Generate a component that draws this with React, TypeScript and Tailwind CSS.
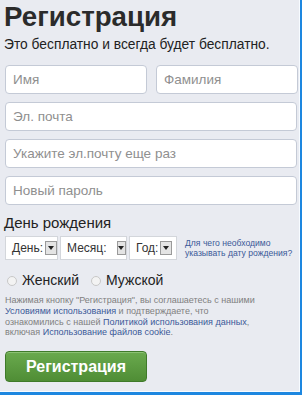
import React from "react";

const sans = { fontFamily: '"Liberation Sans", Arial, sans-serif' };

function TextInput({ placeholder, className }: { placeholder: string; className?: string }) {
  return (
    <input
      placeholder={placeholder}
      className={`h-[29px] rounded-[4px] border border-[#c4cad6] bg-white px-[7px] text-[13.5px] text-[#333] placeholder:text-[#8f8f8f] outline-none ${className ?? ""}`}
    />
  );
}

function DateSelect({ label, width, gap }: { label: string; width: string; gap: string }) {
  return (
    <div className={`flex h-[24px] ${width} shrink-0 items-center border border-[#d3d6db] bg-white pl-[6px] text-[12px] text-[#333]`}>
      <span>{label}</span>
      <span className={`${gap} flex h-[14px] w-[12px] items-center justify-center border border-[#9a9a9a] bg-[#e4e4e4]`}>
        <svg width="6" height="4" viewBox="0 0 6 4">
          <path d="M0 0 L6 0 L3 4 Z" fill="#222" />
        </svg>
      </span>
    </div>
  );
}

function Radio({ label }: { label: string }) {
  return (
    <label className="flex items-center gap-[5px]">
      <span className="h-[10px] w-[10px] rounded-full border border-[#c8c8c8] bg-[#f3f3f3]" />
      <span className="text-[14px] text-[#222]">{label}</span>
    </label>
  );
}

export default function App() {
  return (
    <div className="h-[395px] w-[302px] overflow-hidden border-r-[2px] border-b-[3px] border-[#1d87e0]" style={sans}>
      <div className="flex h-full w-full flex-col border-r border-b border-[#f7fbff] bg-[#e9ebf1] pl-[5px] pr-[4px]">
        <h1 className="mt-[1px] ml-[-1px] text-[27.7px] font-bold leading-[32px] text-[#2b2b2b]">Регистрация</h1>
        <p className="mt-[4px] ml-[-1px] text-[13.8px] leading-[15px] text-[#222]">Это бесплатно и всегда будет бесплатно.</p>

        <div className="mt-[13px] flex flex-col gap-[8px]">
          <div className="flex gap-[9px]">
            <TextInput placeholder="Имя" className="w-[142px]" />
            <TextInput placeholder="Фамилия" className="w-[142px]" />
          </div>
          <TextInput placeholder="Эл. почта" className="w-[292px]" />
          <TextInput placeholder="Укажите эл.почту еще раз" className="w-[292px]" />
          <TextInput placeholder="Новый пароль" className="w-[292px]" />
        </div>

        <div className="mt-[9px] ml-[-1px] text-[15px] leading-[18px] text-[#222]">День рождения</div>
        <div className="mt-[4px] flex items-center gap-[2px]">
          <DateSelect label="День:" width="w-[53px]" gap="ml-[2px]" />
          <DateSelect label="Месяц:" width="w-[67px]" gap="ml-[10px]" />
          <DateSelect label="Год:" width="w-[48px]" gap="ml-[2px]" />
          <a className="ml-[6px] whitespace-nowrap text-[8.6px] leading-[10px] text-[#3b5998]">
            Для чего необходимо
            <br />
            указывать дату рождения?
          </a>
        </div>

        <div className="mt-[10px] flex items-center gap-[12px] pl-[2px]">
          <Radio label="Женский" />
          <Radio label="Мужской" />
        </div>

        <p className="mt-[4px] text-[9px] leading-[10.8px] text-[#808080]">
          Нажимая кнопку "Регистрация", вы соглашаетесь с нашими
          <br />
          <a className="text-[#3b5998]">Условиями использования</a> и подтверждаете, что
          <br />
          ознакомились с нашей <a className="text-[#3b5998]">Политикой использования данных</a>,
          <br />
          включая <a className="text-[#3b5998]">Использование файлов cookie</a>.
        </p>

        <button className="mt-[13px] h-[31px] w-[142px] rounded-[4px] border border-[#3f7a2a] bg-gradient-to-b from-[#6aaa4e] to-[#4f8d35] text-[16px] font-bold text-white shadow-[inset_0_1px_0_#8cc274]">
          Регистрация
        </button>
      </div>
    </div>
  );
}
